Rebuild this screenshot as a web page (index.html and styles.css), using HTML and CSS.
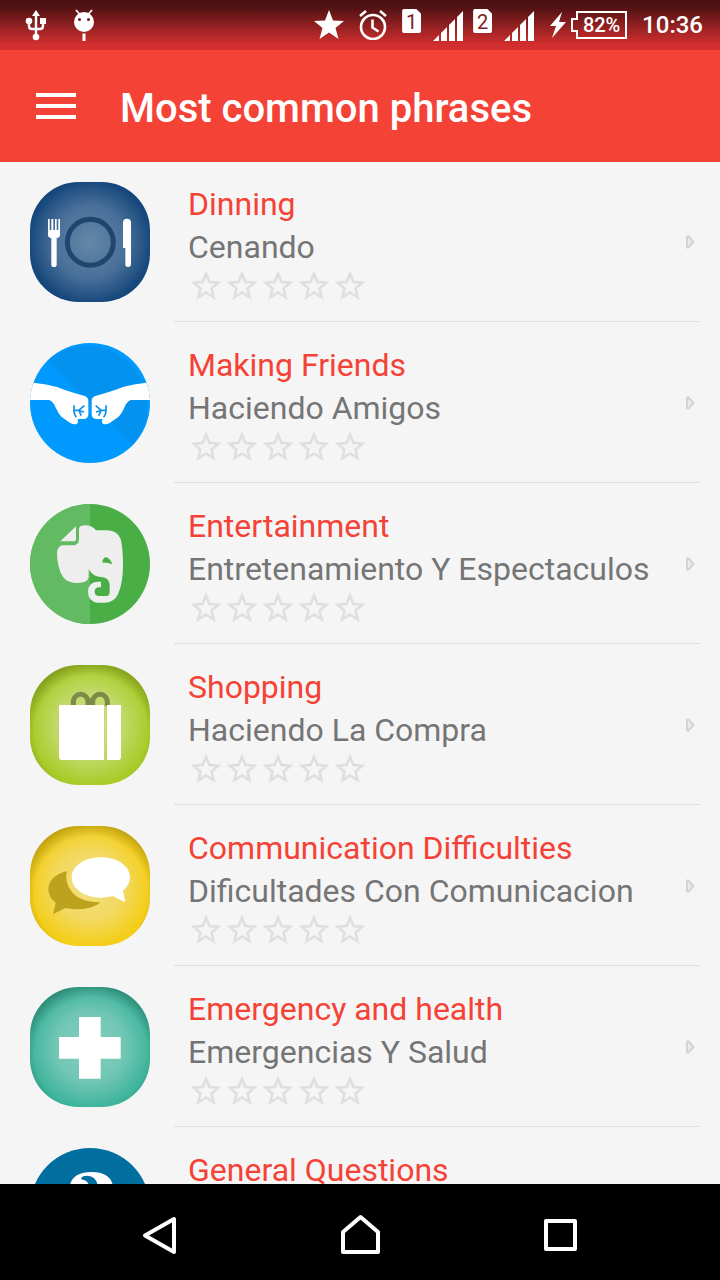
FILE: index.html
```html
<!DOCTYPE html>
<html lang="en">
<head>
  <meta charset="UTF-8">
  <meta name="viewport" content="width=device-width, initial-scale=1.0">
  <title>Most common phrases</title>
  <link rel="stylesheet" href="styles.css">
</head>
<body>
  <!-- Shared shapes -->
  <svg class="defs" width="0" height="0" aria-hidden="true">
    <defs>
      <symbol id="star" viewBox="0 0 24 24">
        <path d="M22.300 9.100l-7.400-.600L12 1.500 9.100 8.500 1.700 9.100l5.600 4.850L5.600 21.300 12 17.400 18.400 21.300l-1.700-7.350L22.300 9.100zM12 15.400l-3.760 2.270 1-4.280-3.320-2.880 4.380-.38L12 6.100l1.710 4.040 4.380.38-3.320 2.880 1 4.280L12 15.400z"></path>
      </symbol>
      <symbol id="rating" viewBox="0 0 180 36">
        <use href="#star" x="0" width="36" height="36"></use>
        <use href="#star" x="36" width="36" height="36"></use>
        <use href="#star" x="72" width="36" height="36"></use>
        <use href="#star" x="108" width="36" height="36"></use>
        <use href="#star" x="144" width="36" height="36"></use>
      </symbol>
      <symbol id="arrow" viewBox="0 0 10 14">
        <path d="M2 1.500h1.500L8.500 7l-5 5.500H2z" fill="#ebebeb" stroke="#d4d4d4" stroke-width="2" stroke-linejoin="round"></path>
      </symbol>
      <symbol id="signal" viewBox="0 0 30 30">
        <path d="M0 30l6-6v6zM8 22l6-6v14H8zM16 14l6-6v22h-6zM24 6l6-6v30h-6z"></path>
      </symbol>
      <radialGradient id="shade" cx="0.51" cy="0.56" r="0.62">
        <stop offset="0.76" stop-color="#000" stop-opacity="0"></stop>
        <stop offset="1" stop-color="#000" stop-opacity="0.28"></stop>
      </radialGradient>
      <radialGradient id="blue" r="0.6">
        <stop offset="0" stop-color="#6487a7"></stop>
        <stop offset="0.5" stop-color="#49709a"></stop>
        <stop offset="0.85" stop-color="#17487c"></stop>
        <stop offset="1" stop-color="#12437a"></stop>
      </radialGradient>
      <radialGradient id="lime" r="0.56">
        <stop offset="0" stop-color="#cfe08c"></stop>
        <stop offset="0.5" stop-color="#c1d968"></stop>
        <stop offset="0.9" stop-color="#a8cb27"></stop>
      </radialGradient>
      <radialGradient id="yellow" r="0.56">
        <stop offset="0" stop-color="#f3df80"></stop>
        <stop offset="0.5" stop-color="#f2d962"></stop>
        <stop offset="0.9" stop-color="#f4ce18"></stop>
      </radialGradient>
      <radialGradient id="teal" r="0.58">
        <stop offset="0" stop-color="#86cfbf"></stop>
        <stop offset="0.5" stop-color="#71c6b4"></stop>
        <stop offset="0.9" stop-color="#3bb39a"></stop>
      </radialGradient>
    </defs>
  </svg>

  <div class="status-bar">
    <div class="status-left">
      <svg width="22" height="32" viewBox="0 0 22 32" fill="none" stroke="#fff" stroke-width="2.400">
        <path d="M11 5v23M4 12v5q0 3 3 3h8q3 0 3-3v-6"></path>
        <path d="M11 1l4 6H7z" fill="#fff" stroke="none"></path>
        <circle cx="4" cy="12" r="3.300" fill="#fff" stroke="none"></circle>
        <path d="M15 9h6v6h-6z" fill="#fff" stroke="none"></path>
        <circle cx="11" cy="28" r="3.300" fill="#fff" stroke="none"></circle>
      </svg>
      <svg width="20" height="32" viewBox="0 0 20 32">
        <path d="M2 1l3.500 4M18 1l-3.500 4" stroke="#fff" stroke-width="1.800"></path>
        <circle cx="10" cy="13" r="10" fill="#fff"></circle>
        <path d="M8.500 24.500h3V32h-3z" fill="#fff"></path>
        <circle cx="5.500" cy="10.500" r="1.500" fill="#6a1719"></circle>
        <circle cx="14.500" cy="10.500" r="1.500" fill="#6a1719"></circle>
      </svg>
    </div>
    <div class="status-right">
      <svg width="30" height="30" viewBox="0 0 30 30" fill="#fff">
        <path d="M15 0l4 10.500 11 .5-8.500 7 3 11L15 22.500 5.500 29l3-11L0 11l11-.5z"></path>
      </svg>
      <svg width="28" height="30" viewBox="0 0 28 30" fill="none" stroke="#fff" stroke-width="2.600">
        <circle cx="14" cy="17" r="12"></circle>
        <path d="M13.500 9.500v8l6 4M1 6l6-5M27 6l-6-5"></path>
      </svg>
      <div class="sim">
        <span class="sim-card">1</span>
        <svg width="30" height="30" fill="#fff"><use href="#signal"></use></svg>
      </div>
      <div class="sim">
        <span class="sim-card">2</span>
        <svg width="30" height="30" fill="#fff"><use href="#signal"></use></svg>
      </div>
      <div class="power">
        <svg width="16" height="26" viewBox="0 0 16 26" fill="#fff">
          <path d="M12 0L0 14h6L2 26l14-16H9z"></path>
        </svg>
        <div class="battery">
          <svg width="56" height="28" viewBox="0 0 56 28" fill="none" stroke="#fff" stroke-width="2">
            <path d="M6 1h49v26H6v-7H1V8h5z"></path>
          </svg>
          <span class="battery-level">82%</span>
        </div>
      </div>
      <time class="clock">10:36</time>
    </div>
  </div>

  <header class="app-bar">
    <button class="menu-button" type="button" aria-label="Open menu">
      <svg width="40" height="26" viewBox="0 0 40 26" fill="#fff">
        <path d="M0 0h40v4H0zM0 11h40v4H0zM0 22h40v4H0z"></path>
      </svg>
    </button>
    <h1 class="app-title">Most common phrases</h1>
  </header>

  <main class="phrases">
    <ul class="phrase-list">
      <li>
        <a class="phrase" href="#dinning">
          <svg class="phrase-icon" viewBox="30 36 360 360">
            <rect x="30" y="36" width="360" height="360" rx="145" fill="url(#blue)"></rect>
            <circle cx="211" cy="217" r="69" fill="none" stroke="#1e466f" stroke-width="15"></circle>
            <path d="M84 147h5v33h5v-33h6v33h5v-33h5v33h5v-33h5v48q0 8-10 9v80q0 7-8 7t-8-7v-80q-10-1-10-9z" fill="#fff"></path>
            <path d="M309 158q0-12 12-12t12 12v124q0 9-9 9t-8-9v-48h-7z" fill="#fff"></path>
          </svg>
          <div class="phrase-body">
            <div class="phrase-text">
              <h2 class="phrase-title">Dinning</h2>
              <p class="phrase-subtitle">Cenando</p>
              <svg class="rating" role="img" aria-label="0 of 5 stars"><use href="#rating"></use></svg>
            </div>
            <svg class="arrow"><use href="#arrow"></use></svg>
          </div>
        </a>
      </li>
      <li>
        <a class="phrase" href="#friends">
          <svg class="phrase-icon" viewBox="30 24 360 360">
            <circle cx="210" cy="204" r="180" fill="#0099fd"></circle>
            <path d="M83 77A180 180 0 0 1 337 331z" fill="#0392f0"></path>
            <path d="M41 143Q80 147 111 156Q145 170 192 182Q205 186 205 197V239Q204 251 190 252H173Q176 262 171 267Q162 270 151 264L124 245Q116 238 108 220Q101 200 88 195H30Q32 165 41 143z" fill="#fff"></path>
            <path d="M379 143Q340 147 309 156Q275 170 228 182Q215 186 215 197V239Q216 251 230 252H247Q244 262 249 267Q258 270 269 264L296 245Q304 238 312 220Q319 200 332 195H390Q388 165 379 143z" fill="#fff"></path>
            <path d="M162 211v18q0 8 7 18M162 226h14l17-14M176 227l16 4M178 230l6 12M258 211v18q0 8-7 18M258 226h-14l-17-14M244 227l-16 4M242 230l-6 12" fill="none" stroke="#0b91e8" stroke-width="5"></path>
          </svg>
          <div class="phrase-body">
            <div class="phrase-text">
              <h2 class="phrase-title">Making Friends</h2>
              <p class="phrase-subtitle">Haciendo Amigos</p>
              <svg class="rating" role="img" aria-label="0 of 5 stars"><use href="#rating"></use></svg>
            </div>
            <svg class="arrow"><use href="#arrow"></use></svg>
          </div>
        </a>
      </li>
      <li>
        <a class="phrase" href="#entertainment">
          <svg class="phrase-icon" viewBox="30 27 360 360">
            <circle cx="210" cy="207" r="180" fill="#49ae46"></circle>
            <path d="M210 27a180 180 0 0 0 0 360z" fill="#62ba62"></path>
            <path d="M121 139L168 94V132Q168 139 160 139z" fill="#eee"></path>
            <path d="M177 101Q179 91 196 91Q216 91 228 106H262Q294 108 302 132Q309 160 309 210Q309 265 294 298Q282 323 256 323H233Q204 319 204 290Q205 261 232 260H243V277H236Q224 278 224 290Q225 303 237 303H260Q269 303 269 292V268Q267 247 242 246Q217 244 206 222V247Q203 264 174 264Q142 264 129 246Q111 217 111 173Q111 158 125 151H162Q177 149 177 133z" fill="#eee"></path>
            <path d="M247 203Q248 189 257 187Q270 188 277 208Q262 202 247 203z" fill="#49ae46"></path>
          </svg>
          <div class="phrase-body">
            <div class="phrase-text">
              <h2 class="phrase-title">Entertainment</h2>
              <p class="phrase-subtitle">Entretenamiento Y Espectaculos</p>
              <svg class="rating" role="img" aria-label="0 of 5 stars"><use href="#rating"></use></svg>
            </div>
            <svg class="arrow"><use href="#arrow"></use></svg>
          </div>
        </a>
      </li>
      <li>
        <a class="phrase" href="#shopping">
          <svg class="phrase-icon" viewBox="30 30 360 360">
            <rect x="30" y="30" width="360" height="360" rx="145" fill="url(#lime)"></rect>
            <rect x="30" y="30" width="360" height="360" rx="145" fill="url(#shade)"></rect>
            <path d="M160 152v-12a22 22 0 0 1 44 0v12M218 152v-12a22 22 0 0 1 44 0v12M211 130v22" fill="none" stroke="#7d8b49" stroke-width="15"></path>
            <path d="M117 150h135v165H127q-10 0-10-10zM261 150h42v155q0 10-10 10h-32z" fill="#fff"></path>
          </svg>
          <div class="phrase-body">
            <div class="phrase-text">
              <h2 class="phrase-title">Shopping</h2>
              <p class="phrase-subtitle">Haciendo La Compra</p>
              <svg class="rating" role="img" aria-label="0 of 5 stars"><use href="#rating"></use></svg>
            </div>
            <svg class="arrow"><use href="#arrow"></use></svg>
          </div>
        </a>
      </li>
      <li>
        <a class="phrase" href="#communication">
          <svg class="phrase-icon" viewBox="30 33 360 360">
            <rect x="30" y="33" width="360" height="360" rx="145" fill="url(#yellow)"></rect>
            <rect x="30" y="33" width="360" height="360" rx="145" fill="url(#shade)"></rect>
            <path d="M140 168Q134 202 154 229Q181 263 242 262Q207 292 136 279L99 298L107 263Q85 247 85 223Q86 183 140 168z" fill="#bda31d"></path>
            <path d="M243 127C292 127 330 153 330 187Q330 210 309 227L316 262L278 243Q260 248 243 248C194 248 155 222 155 187C155 153 194 127 243 127z" fill="#fff"></path>
          </svg>
          <div class="phrase-body">
            <div class="phrase-text">
              <h2 class="phrase-title">Communication Difficulties</h2>
              <p class="phrase-subtitle">Dificultades Con Comunicacion</p>
              <svg class="rating" role="img" aria-label="0 of 5 stars"><use href="#rating"></use></svg>
            </div>
            <svg class="arrow"><use href="#arrow"></use></svg>
          </div>
        </a>
      </li>
      <li>
        <a class="phrase" href="#emergency">
          <svg class="phrase-icon" viewBox="30 21 360 360">
            <rect x="30" y="21" width="360" height="360" rx="145" fill="url(#teal)"></rect>
            <rect x="30" y="21" width="360" height="360" rx="145" fill="url(#shade)"></rect>
            <path d="M177 111h65v60h60v65h-60v60h-65v-60h-60v-65h60z" fill="#fff"></path>
          </svg>
          <div class="phrase-body">
            <div class="phrase-text">
              <h2 class="phrase-title">Emergency and health</h2>
              <p class="phrase-subtitle">Emergencias Y Salud</p>
              <svg class="rating" role="img" aria-label="0 of 5 stars"><use href="#rating"></use></svg>
            </div>
            <svg class="arrow"><use href="#arrow"></use></svg>
          </div>
        </a>
      </li>
      <li>
        <a class="phrase" href="#questions">
          <svg class="phrase-icon" viewBox="30 84 360 360">
            <circle cx="210" cy="264" r="180" fill="#006fa0"></circle>
            <path d="M148 212Q148 156 215 156Q280 156 280 212Q280 250 240 268Q224 276 222 300H198Q196 262 220 246Q236 230 234 202Q230 168 203 167Q181 168 184 178Q208 182 208 205Q205 230 176 232Q150 232 148 212z" fill="#fff"></path>
            <circle cx="211" cy="342" r="24" fill="#fff"></circle>
          </svg>
          <div class="phrase-body">
            <div class="phrase-text">
              <h2 class="phrase-title">General Questions</h2>
            </div>
          </div>
        </a>
      </li>
    </ul>
  </main>

  <nav class="nav-bar">
    <button class="nav-button" type="button" aria-label="Back">
      <svg width="48" height="48" viewBox="0 0 48 48"><path d="M38 11v33L9 27.500z"></path></svg>
    </button>
    <button class="nav-button" type="button" aria-label="Home">
      <svg width="48" height="48" viewBox="0 0 48 48"><path d="M7 44V24L24.500 9 42 24v20z"></path></svg>
    </button>
    <button class="nav-button" type="button" aria-label="Recent apps">
      <svg width="48" height="48" viewBox="0 0 48 48"><path d="M10 13h29v28H10z"></path></svg>
    </button>
  </nav>
</body>
</html>
```

FILE: styles.css
```css
:root {
  --primary-color: #f44336;
  --text-color: #757575;
  --background-color: #f5f5f5;
  --divider-color: #dedede;
}

* {
  box-sizing: border-box;
}

body {
  display: flex;
  flex-direction: column;
  height: 100vh;
  margin: 0;
  font-family: Roboto, sans-serif;
  color: var(--text-color);
  background-color: var(--background-color);
}

h1,
h2,
p,
ul {
  margin: 0;
  padding: 0;
}

svg {
  display: block;
  flex: none;
}

button {
  padding: 0;
  border: 0;
  background: none;
  cursor: pointer;
}

.defs {
  position: absolute;
}

/* Status bar */
.status-bar {
  display: flex;
  flex: none;
  justify-content: space-between;
  align-items: center;
  height: 50px;
  padding: 0 17px 0 25px;
  color: #fff;
  background: linear-gradient(#4a1012 10%, #d32f2f 90%);
}

.status-left {
  display: flex;
  gap: 27px;
}

.status-right {
  display: flex;
  align-items: center;
  gap: 15px;
}

.sim {
  display: flex;
  align-items: flex-end;
  gap: 12px;
  height: 32px;
}

.sim + .sim {
  margin-left: -5px;
}

.sim-card {
  align-self: flex-start;
  width: 19px;
  height: 24px;
  font-size: 20px;
  line-height: 26px;
  text-align: center;
  color: #7c1c1e;
  background-color: #fff;
  border-radius: 2px;
  clip-path: polygon(0 0, 75% 0, 100% 20%, 100% 100%, 0 100%);
}

.power {
  display: flex;
  align-items: center;
  gap: 5px;
  margin-left: 1px;
}

.battery {
  display: grid;
}

.battery > * {
  grid-area: 1 / 1;
}

.battery-level {
  padding-left: 5px;
  font-size: 20px;
  font-weight: 500;
  line-height: 28px;
  text-align: center;
}

.clock {
  font-size: 24px;
  font-weight: 500;
}

/* App bar */
.app-bar {
  display: flex;
  flex: none;
  align-items: center;
  gap: 44px;
  height: 112px;
  padding: 0 36px;
  color: #fff;
  background-color: var(--primary-color);
}

.app-title {
  padding-top: 6px;
  font-size: 40px;
  font-weight: 500;
  line-height: 48px;
}

/* Phrase list */
.phrases {
  flex: 1;
  min-height: 0;
  overflow: hidden;
}

.phrase-list {
  list-style: none;
}

.phrase {
  display: flex;
  gap: 24px;
  padding: 0 20px 1px 30px;
  color: inherit;
  text-decoration: none;
}

.phrase-icon {
  width: 120px;
  height: 120px;
  margin-top: 20px;
}

.phrase-body {
  display: flex;
  flex: 1;
  justify-content: space-between;
  align-items: center;
  min-height: 160px;
  padding: 0 5px 0 14px;
  border-bottom: 1px solid var(--divider-color);
}

.phrase-text {
  align-self: flex-start;
  padding-top: 21px;
}

.phrase-title,
.phrase-subtitle {
  font-size: 32px;
  font-weight: 400;
  line-height: 43px;
}

.phrase-title {
  color: var(--primary-color);
}

.rating {
  width: 180px;
  height: 36px;
  margin-top: -1px;
  fill: #dfdfdf;
}

.arrow {
  width: 10px;
  height: 14px;
}

/* Navigation bar */
.nav-bar {
  display: flex;
  flex: none;
  height: 96px;
  padding: 0 60px;
  background-color: #000;
}

.nav-button {
  display: flex;
  flex: 1;
  justify-content: center;
  align-items: center;
}

.nav-button svg {
  fill: none;
  stroke: #fff;
  stroke-width: 4;
  stroke-linejoin: round;
}
```
